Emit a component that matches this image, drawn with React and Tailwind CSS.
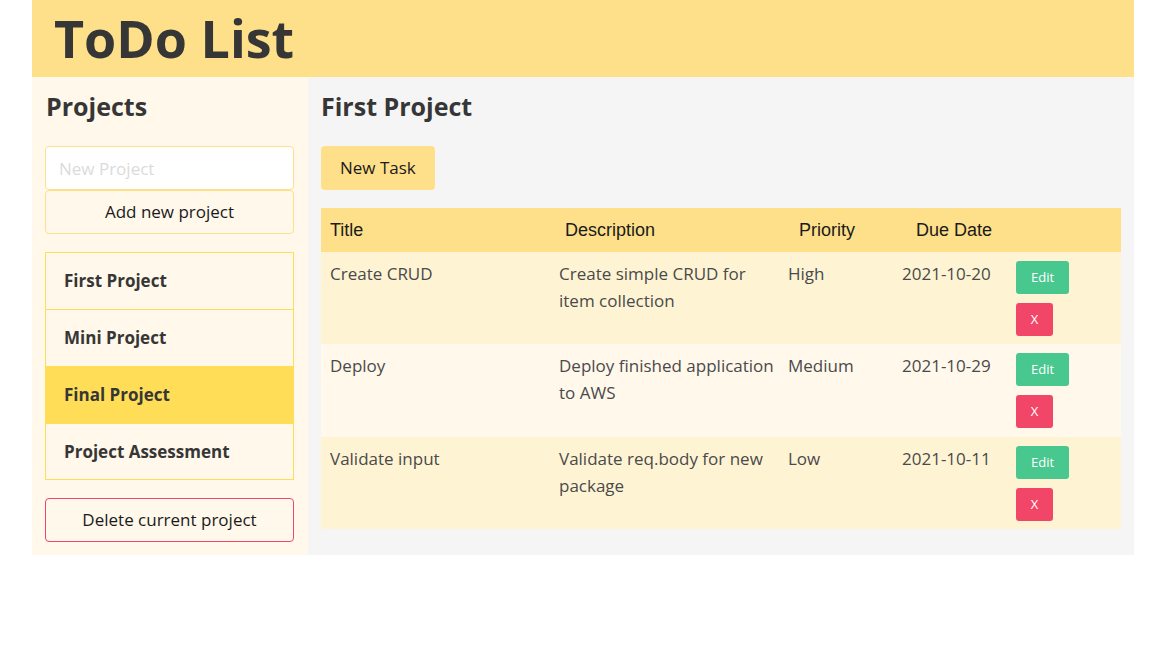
import React from 'react';

const projects = [
  { name: 'First Project', active: false },
  { name: 'Mini Project', active: false },
  { name: 'Final Project', active: true },
  { name: 'Project Assessment', active: false },
];

const tasks = [
  { title: 'Create CRUD', desc: 'Create simple CRUD for item collection', priority: 'High', due: '2021-10-20', bg: 'bg-[#fef4d4] h-[92px]' },
  { title: 'Deploy', desc: 'Deploy finished application to AWS', priority: 'Medium', due: '2021-10-29', bg: 'bg-[#fff8eb] h-[93px]' },
  { title: 'Validate input', desc: 'Validate req.body for new package', priority: 'Low', due: '2021-10-11', bg: 'bg-[#fef4d4] h-[92px]' },
];

const ui = { fontFamily: '"Open Sans", "Noto Sans", sans-serif' };
const arial = { fontFamily: '"Liberation Sans", Arial, sans-serif' };

function Sidebar() {
  return (
    <aside className="w-[276px] shrink-0 bg-[#fff8eb] pt-[14px] pl-[13px] pr-[14px] pb-[13px]">
      <h2 className="h-[30px] leading-[30px] pl-[1px] text-[25px] font-bold text-[#363636] mb-[25px]">Projects</h2>
      <input
        placeholder="New Project"
        className="block w-full h-[44px] px-[13px] bg-white border border-[#ffe08a] rounded-[4px] text-[17px] text-[#363636] placeholder:text-[#dbdbdb] outline-none"
        style={ui}
      />
      <button className="block w-full h-[44px] bg-[#fff8eb] border border-[#ffe08a] rounded-[4px] text-[17px] text-[#1a1a1a]" style={ui}>
        Add new project
      </button>
      <ul className="mt-[18px]">
        {projects.map((p, i) => (
          <li
            key={p.name}
            className={`h-[57px] flex items-center pl-[18px] text-[17px] font-bold text-[#363636] border-x border-t border-[#ffdd57] ${i === projects.length - 1 ? 'border-b' : ''} ${p.active ? 'bg-[#ffdd57]' : ''}`}
          >
            {p.name}
          </li>
        ))}
      </ul>
      <button className="mt-[18px] block w-full h-[44px] bg-[#fff8eb] border border-[#f14668] rounded-[4px] text-[17px] text-[#1a1a1a]" style={ui}>
        Delete current project
      </button>
    </aside>
  );
}

function TaskTable() {
  return (
    <div className="mt-[18px] w-[800px]">
      <div className="grid grid-cols-[229px_229px_114px_114px_114px] h-[44px] items-center bg-[#ffe08a] text-[18px] text-[#1a1a1a]" style={arial}>
        <div className="pl-[9px]">Title</div>
        <div className="pl-[15px]">Description</div>
        <div className="pl-[20px]">Priority</div>
        <div className="pl-[23px]">Due Date</div>
        <div></div>
      </div>
      {tasks.map((t) => (
        <div key={t.title} className={`grid grid-cols-[229px_229px_114px_114px_114px] text-[17px] leading-[27px] text-[#4a4a4a] ${t.bg}`}>
          <div className="pl-[9px] pt-[8px]">{t.title}</div>
          <div className="pl-[9px] pr-[2px] pt-[8px]">{t.desc}</div>
          <div className="pl-[9px] pt-[8px]">{t.priority}</div>
          <div className="pl-[9px] pt-[8px]">{t.due}</div>
          <div className="pl-[9px] pt-[9px] flex flex-col items-start gap-[9px]">
            <button className="w-[53px] h-[33px] rounded-[3px] bg-[#48c78e] text-white text-[13px]">Edit</button>
            <button className="w-[37px] h-[33px] rounded-[3px] bg-[#f14668] text-white text-[13px]">X</button>
          </div>
        </div>
      ))}
    </div>
  );
}

export default function App() {
  return (
    <div className="w-[1166px] min-h-[655px] bg-white" style={ui}>
      <div className="mx-[32px] w-[1102px]">
        <header className="h-[77px] bg-[#ffe08a] flex items-center pl-[22px]">
          <h1 className="text-[52px] font-bold text-[#363636] leading-none -mt-[1px]">ToDo List</h1>
        </header>
        <div className="flex">
          <Sidebar />
          <main className="flex-1 bg-[#f5f5f5] pt-[14px] px-[13px]">
            <h2 className="h-[30px] leading-[30px] text-[25px] font-bold text-[#363636] mb-[25px]">First Project</h2>
            <button className="h-[44px] px-[19px] bg-[#ffe08a] rounded-[4px] text-[17px] text-[#1a1a1a]">New Task</button>
            <TaskTable />
          </main>
        </div>
      </div>
    </div>
  );
}
